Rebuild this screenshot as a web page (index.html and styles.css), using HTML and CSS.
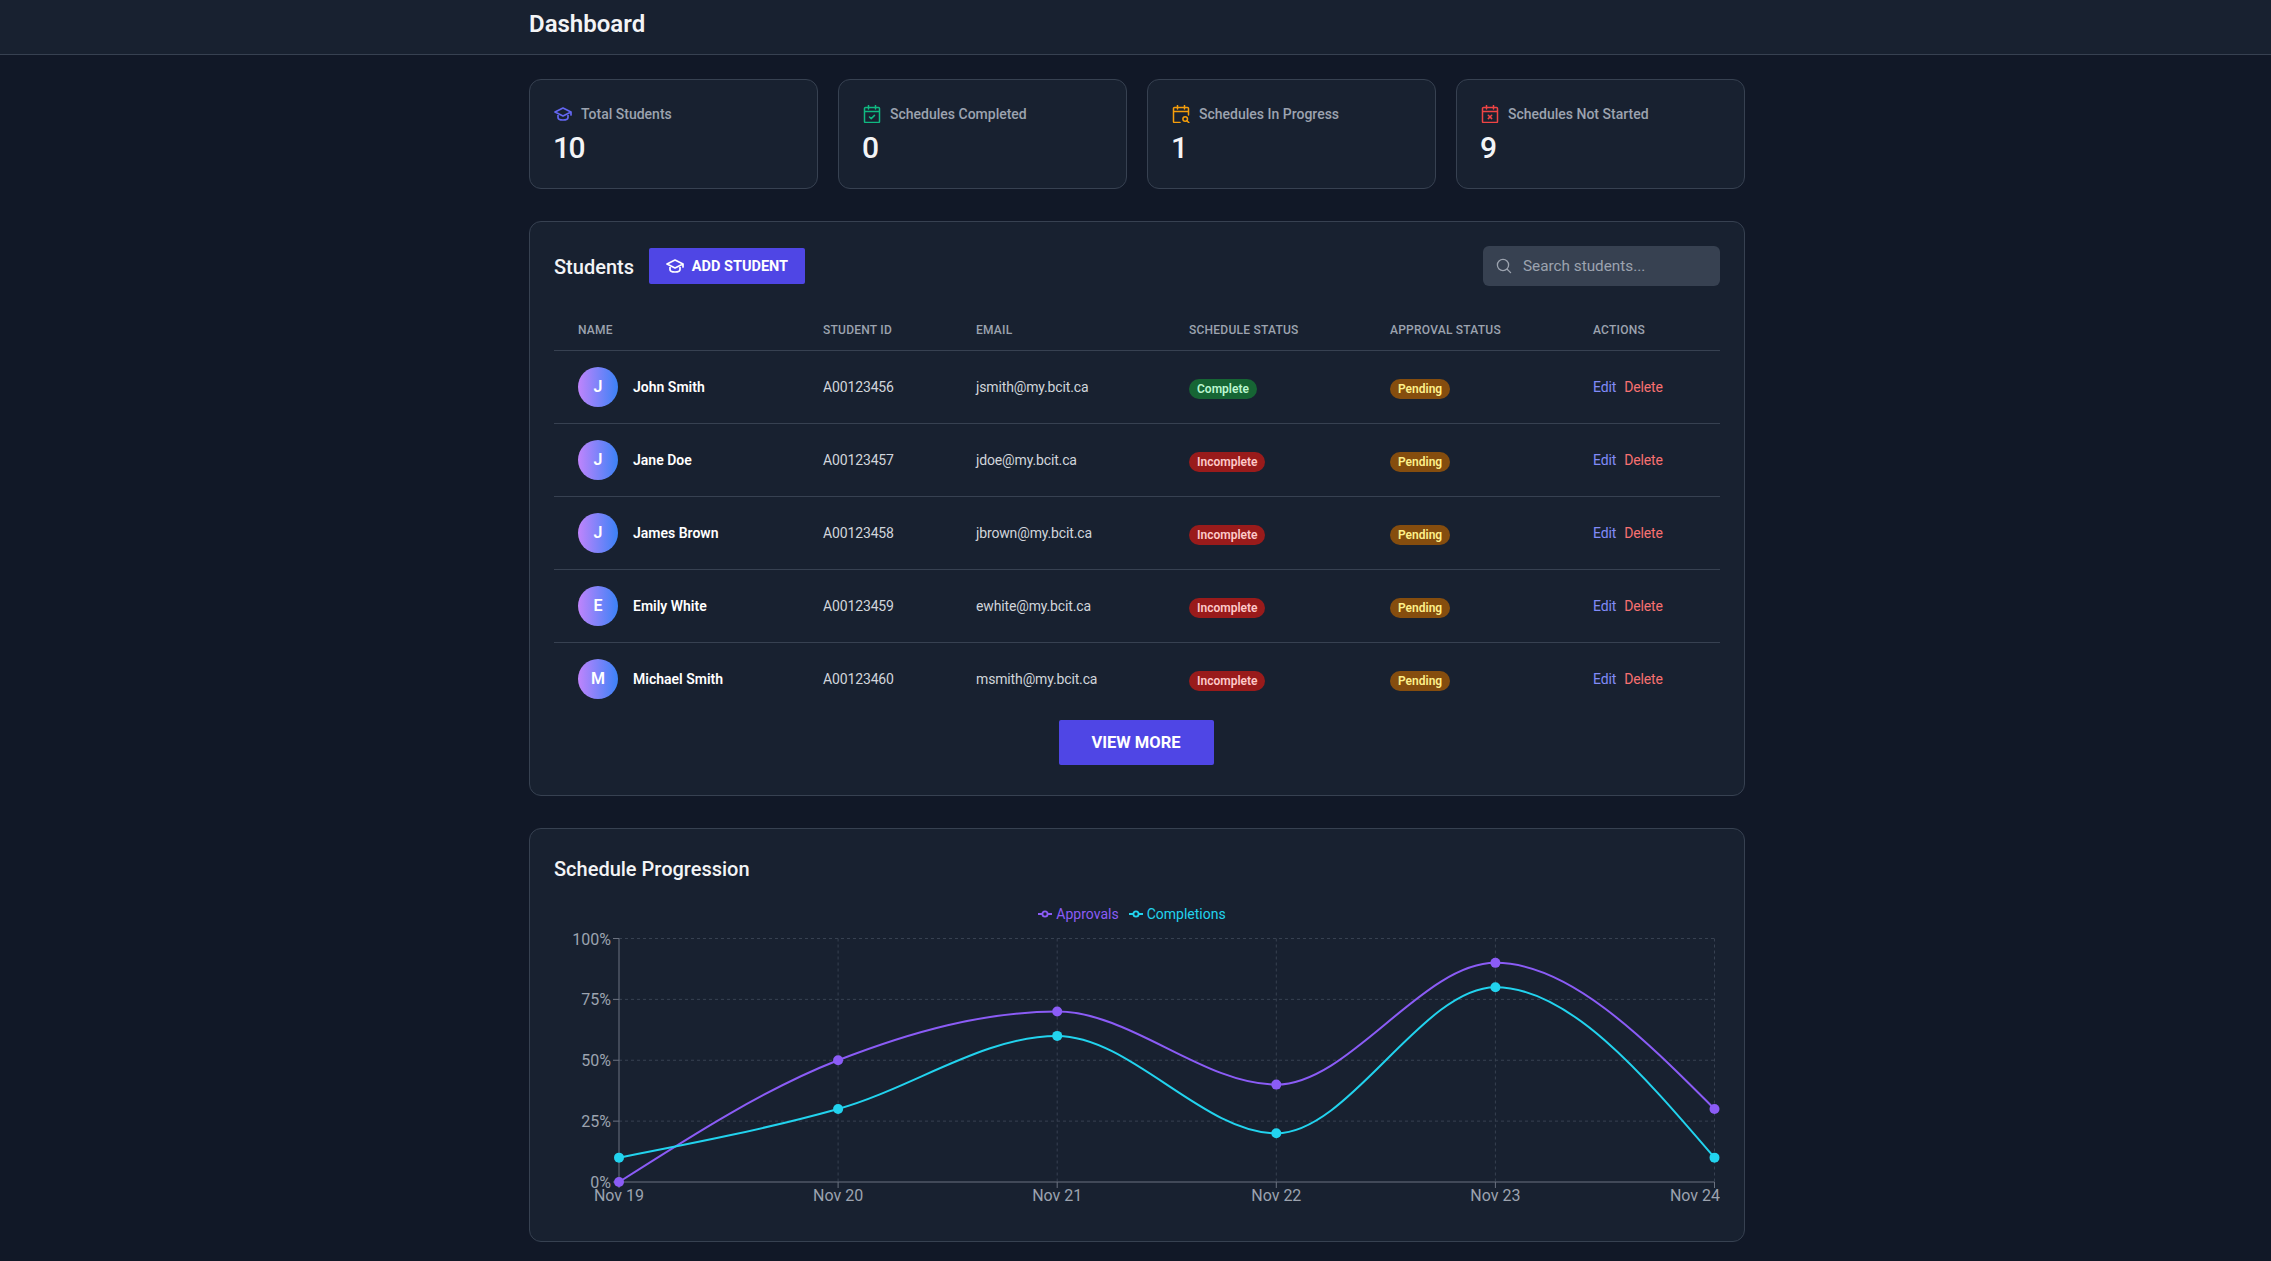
FILE: index.html
```html
<!DOCTYPE html>
<html lang="en">
    <head>
        <meta charset="UTF-8">
        <meta name="viewport" content="width=device-width, initial-scale=1.0">
        <title>Dashboard</title>
        <link rel="stylesheet" href="styles.css">
    </head>
    <body>
        <svg class="sprites" width="0" height="0">
            <symbol id="cap" viewBox="0 0 18 14">
                <path d="M9 1 17 5 9 9 1 5Z M4 6.6V10.5C4 12 6.5 13 9 13S14 12 14 10.5V6.6 M17 5V8" fill="none" stroke="currentColor" stroke-width="1.7" stroke-linejoin="round" stroke-linecap="round"/>
            </symbol>
            <symbol id="calendar-check" viewBox="0 0 18 18">
                <path d="M2.5 2.5H15.5A1 1 0 0 1 16.5 3.5V16.5A1 1 0 0 1 15.5 17.5H2.5A1 1 0 0 1 1.5 16.5V3.5A1 1 0 0 1 2.5 2.5Z M1.5 6.5H16.5 M5.5 .5V4 M12.5 .5V4 M6.5 12 8.2 13.6 11.5 10.4" fill="none" stroke="currentColor" stroke-width="1.5" stroke-linecap="round" stroke-linejoin="round"/>
            </symbol>
            <symbol id="calendar-search" viewBox="0 0 18 18">
                <path d="M8 17.5H2.5A1 1 0 0 1 1.5 16.5V3.5A1 1 0 0 1 2.5 2.5H15.5A1 1 0 0 1 16.5 3.5V10 M1.5 6.5H16.5 M5.5 .5V4 M12.5 .5V4 M14.8 15.8 16.8 17.6" fill="none" stroke="currentColor" stroke-width="1.5" stroke-linecap="round" stroke-linejoin="round"/>
                <circle cx="13.2" cy="14" r="2.3" fill="none" stroke="currentColor" stroke-width="1.5"/>
            </symbol>
            <symbol id="calendar-x" viewBox="0 0 18 18">
                <path d="M2.5 2.5H15.5A1 1 0 0 1 16.5 3.5V16.5A1 1 0 0 1 15.5 17.5H2.5A1 1 0 0 1 1.5 16.5V3.5A1 1 0 0 1 2.5 2.5Z M1.5 6.5H16.5 M5.5 .5V4 M12.5 .5V4 M7.3 10.3 10.7 13.6 M10.7 10.3 7.3 13.6" fill="none" stroke="currentColor" stroke-width="1.5" stroke-linecap="round"/>
            </symbol>
        </svg>

        <header class="topbar">
            <div class="container">
                <h1>Dashboard</h1>
            </div>
        </header>

        <main class="container">
            <section class="stats">
                <div class="stat">
                    <div class="stat-label">
                        <svg class="stat-icon icon-indigo"><use href="#cap"/></svg>
                        Total Students
                    </div>
                    <div class="stat-value">10</div>
                </div>
                <div class="stat">
                    <div class="stat-label">
                        <svg class="stat-icon icon-green"><use href="#calendar-check"/></svg>
                        Schedules Completed
                    </div>
                    <div class="stat-value">0</div>
                </div>
                <div class="stat">
                    <div class="stat-label">
                        <svg class="stat-icon icon-amber"><use href="#calendar-search"/></svg>
                        Schedules In Progress
                    </div>
                    <div class="stat-value">1</div>
                </div>
                <div class="stat">
                    <div class="stat-label">
                        <svg class="stat-icon icon-red"><use href="#calendar-x"/></svg>
                        Schedules Not Started
                    </div>
                    <div class="stat-value">9</div>
                </div>
            </section>

            <section class="panel students">
                <div class="panel-head">
                    <h2>Students</h2>
                    <button class="btn btn-add">
                        <svg class="btn-icon"><use href="#cap"/></svg>
                        ADD STUDENT
                    </button>
                    <label class="search">
                        <svg class="search-icon" viewBox="0 0 16 16">
                            <circle cx="7" cy="7" r="5.6" fill="none" stroke="currentColor" stroke-width="1.3"/>
                            <path d="M11.2 11.2 14.6 14.6" fill="none" stroke="currentColor" stroke-width="1.3" stroke-linecap="round"/>
                        </svg>
                        <input type="text" placeholder="Search students...">
                    </label>
                </div>

                <table class="table">
                    <thead>
                        <tr>
                            <th class="col-name">Name</th>
                            <th class="col-id">Student ID</th>
                            <th class="col-email">Email</th>
                            <th class="col-schedule">Schedule Status</th>
                            <th class="col-approval">Approval Status</th>
                            <th class="col-actions">Actions</th>
                        </tr>
                    </thead>
                    <tbody>
                        <tr>
                            <td><div class="person"><span class="avatar">J</span><span class="person-name">John Smith</span></div></td>
                            <td>A00123456</td>
                            <td>jsmith@my.bcit.ca</td>
                            <td><span class="badge badge-green">Complete</span></td>
                            <td><span class="badge badge-yellow">Pending</span></td>
                            <td><a class="link-edit">Edit</a><a class="link-delete">Delete</a></td>
                        </tr>
                        <tr>
                            <td><div class="person"><span class="avatar">J</span><span class="person-name">Jane Doe</span></div></td>
                            <td>A00123457</td>
                            <td>jdoe@my.bcit.ca</td>
                            <td><span class="badge badge-red">Incomplete</span></td>
                            <td><span class="badge badge-yellow">Pending</span></td>
                            <td><a class="link-edit">Edit</a><a class="link-delete">Delete</a></td>
                        </tr>
                        <tr>
                            <td><div class="person"><span class="avatar">J</span><span class="person-name">James Brown</span></div></td>
                            <td>A00123458</td>
                            <td>jbrown@my.bcit.ca</td>
                            <td><span class="badge badge-red">Incomplete</span></td>
                            <td><span class="badge badge-yellow">Pending</span></td>
                            <td><a class="link-edit">Edit</a><a class="link-delete">Delete</a></td>
                        </tr>
                        <tr>
                            <td><div class="person"><span class="avatar">E</span><span class="person-name">Emily White</span></div></td>
                            <td>A00123459</td>
                            <td>ewhite@my.bcit.ca</td>
                            <td><span class="badge badge-red">Incomplete</span></td>
                            <td><span class="badge badge-yellow">Pending</span></td>
                            <td><a class="link-edit">Edit</a><a class="link-delete">Delete</a></td>
                        </tr>
                        <tr>
                            <td><div class="person"><span class="avatar">M</span><span class="person-name">Michael Smith</span></div></td>
                            <td>A00123460</td>
                            <td>msmith@my.bcit.ca</td>
                            <td><span class="badge badge-red">Incomplete</span></td>
                            <td><span class="badge badge-yellow">Pending</span></td>
                            <td><a class="link-edit">Edit</a><a class="link-delete">Delete</a></td>
                        </tr>
                    </tbody>
                </table>

                <div class="more">
                    <button class="btn btn-more">VIEW MORE</button>
                </div>
            </section>

            <section class="panel progression">
                <h2>Schedule Progression</h2>
                <ul class="legend">
                    <li class="legend-item legend-approvals">
                        <svg class="legend-icon" viewBox="0 0 14 14"><path d="M0 7H4.5M9.5 7H14" stroke="currentColor" stroke-width="2"/><circle cx="7" cy="7" r="2.6" fill="none" stroke="currentColor" stroke-width="1.8"/></svg>
                        Approvals
                    </li>
                    <li class="legend-item legend-completions">
                        <svg class="legend-icon" viewBox="0 0 14 14"><path d="M0 7H4.5M9.5 7H14" stroke="currentColor" stroke-width="2"/><circle cx="7" cy="7" r="2.6" fill="none" stroke="currentColor" stroke-width="1.8"/></svg>
                        Completions
                    </li>
                </ul>
                <svg id="chart" class="chart" width="1166" height="292" viewBox="0 0 1166 292"></svg>
            </section>
        </main>
        <script src="script.js"></script>
    </body>
</html>
```
FILE: styles.css
```css
* {
    box-sizing: border-box;
}
body {
    background: #111827;
    color: #f3f4f6;
    font-family: Roboto, "Noto Sans", sans-serif;
    font-size: 14px;
    margin: 0;
    padding-bottom: 16px;
}
h1, h2 {
    margin: 0;
}
.sprites {
    position: absolute;
}
.container {
    margin-left: 529px;
    width: 1216px;
}
.topbar {
    background: #182130;
    border-bottom: 1px solid #374151;
    height: 55px;
    padding-top: 8px;
}
.topbar h1 {
    font-size: 24px;
    font-weight: 600;
    line-height: 32px;
}

.stats {
    display: grid;
    gap: 20px;
    grid-template-columns: repeat(4, 1fr);
    padding-top: 24px;
}
.stat {
    background: #182130;
    border: 1px solid #374151;
    border-radius: 12px;
    height: 110px;
    padding: 24px;
}
.stat-label {
    align-items: center;
    color: #9ca3af;
    display: flex;
    font-weight: 500;
    gap: 9px;
    line-height: 20px;
}
.stat-icon {
    flex: none;
    height: 18px;
    width: 18px;
}
.icon-indigo { color: #6366f1; }
.icon-green { color: #10b981; }
.icon-amber { color: #f59e0b; }
.icon-red { color: #ef4444; }
.stat-value {
    font-size: 30px;
    font-weight: 500;
    letter-spacing: -1.5px;
    line-height: 36px;
    margin: 6px 0 0 -1px;
}

.panel {
    background: #182130;
    border: 1px solid #374151;
    border-radius: 12px;
    margin-top: 32px;
    padding: 24px;
}
.panel h2 {
    font-size: 20px;
    font-weight: 500;
    line-height: 28px;
}
.panel-head {
    align-items: center;
    display: flex;
    gap: 15px;
}
.panel-head h2 {
    padding-top: 2px;
}
.btn {
    align-items: center;
    background: #4f46e5;
    border: 0;
    border-radius: 2px;
    color: white;
    display: inline-flex;
    font-family: inherit;
    font-weight: 700;
    justify-content: center;
}
.btn-add {
    font-size: 14.5px;
    gap: 8px;
    height: 36px;
    width: 156px;
}
.btn-icon {
    height: 14px;
    width: 18px;
}
.search {
    align-items: center;
    background: #374151;
    border-radius: 6px;
    color: #9ca3af;
    display: flex;
    gap: 9px;
    height: 40px;
    margin-left: auto;
    padding-left: 13px;
    width: 237px;
}
.search-icon {
    flex: none;
    height: 16px;
    width: 16px;
}
.search input {
    background: none;
    border: 0;
    color: #f3f4f6;
    font-family: inherit;
    font-size: 15.3px;
    min-width: 0;
    outline: none;
    width: 100%;
}
.search input::placeholder {
    color: #9ca3af;
    opacity: 1;
}

.table {
    border-collapse: separate;
    border-spacing: 0;
    margin-top: 24px;
    table-layout: fixed;
    width: 100%;
}
.table th {
    border-bottom: 1px solid #374151;
    color: #9ca3af;
    font-size: 12px;
    font-weight: 500;
    letter-spacing: .02em;
    line-height: 16px;
    padding: 12px 24px;
    text-align: left;
    text-transform: uppercase;
    white-space: nowrap;
}
.col-name { width: 245px; }
.col-id { width: 153px; }
.col-email { width: 213px; }
.col-schedule { width: 201px; }
.col-approval { width: 203px; }
.col-actions { width: 151px; }
.table td {
    border-bottom: 1px solid #374151;
    color: #d1d5db;
    letter-spacing: -.01em;
    line-height: 20px;
    padding: 16px 24px;
    white-space: nowrap;
}
.table tr:last-child td {
    border-bottom: 0;
}
.person {
    align-items: center;
    display: flex;
    gap: 15px;
}
.avatar {
    align-items: center;
    background: linear-gradient(to right, #c084fc, #3b82f6);
    border-radius: 50%;
    color: white;
    display: flex;
    flex: none;
    font-size: 16px;
    font-weight: 600;
    height: 40px;
    justify-content: center;
    width: 40px;
}
.person-name {
    color: white;
    font-weight: 600;
    letter-spacing: 0;
}
.badge {
    border-radius: 10px;
    display: inline-block;
    font-size: 12px;
    font-weight: 600;
    letter-spacing: 0;
    line-height: 20px;
    padding: 0 8px;
    vertical-align: -2px;
}
.badge-green { background: #166534; color: #bbf7d0; }
.badge-red { background: #991b1b; color: #fecaca; }
.badge-yellow { background: #854d0e; color: #fef08a; }
.link-edit {
    color: #818cf8;
    margin-right: 8px;
}
.link-delete {
    color: #f87171;
}

.more {
    display: flex;
    justify-content: center;
    margin: 5px 2px 6px 0;
}
.btn-more {
    font-size: 16.5px;
    height: 45px;
    width: 155px;
}

.progression h2 {
    margin-top: 2px;
}
.legend {
    display: flex;
    gap: 10px;
    justify-content: center;
    line-height: 20px;
    list-style: none;
    margin: 21px 10px 0 0;
    padding: 0;
}
.legend-item {
    align-items: center;
    display: flex;
    gap: 4px;
}
.legend-approvals { color: #8b5cf6; }
.legend-completions { color: #22d3ee; }
.legend-icon {
    height: 14px;
    width: 14px;
}
.chart {
    display: block;
    margin-top: 1px;
}
.grid-line {
    stroke: #374151;
    stroke-dasharray: 3 3;
}
.axis-line {
    stroke: #6b7280;
}
.tick-label {
    fill: #9ca3af;
    font-size: 16px;
}
.series {
    fill: none;
    stroke-width: 2;
}
```
FILE: script.js
```js
const days = ["Nov 19", "Nov 20", "Nov 21", "Nov 22", "Nov 23", "Nov 24"];
const series = [
    { color: "#8b5cf6", values: [0, 50, 70, 40, 90, 30] },
    { color: "#22d3ee", values: [10, 30, 60, 20, 80, 10] },
];
const left = 65;
const step = 219.1;
const top100 = 13.5;
const bottom = 257;
const right = left + step * 5;

const chart = document.getElementById("chart");

function add(name, attrs, text) {
    const el = document.createElementNS("http://www.w3.org/2000/svg", name);
    for (const key in attrs) el.setAttribute(key, attrs[key]);
    if (text) el.textContent = text;
    chart.appendChild(el);
    return el;
}

function yOf(value) {
    return bottom - (bottom - top100) * value / 100;
}

// monotone curve through evenly spaced points
function curve(points) {
    const n = points.length;
    const slopes = [];
    for (let i = 1; i < n - 1; i++) {
        const s0 = (points[i][1] - points[i - 1][1]) / step;
        const s1 = (points[i + 1][1] - points[i][1]) / step;
        const p = (s0 + s1) / 2;
        slopes[i] = (Math.sign(s0) + Math.sign(s1)) * Math.min(Math.abs(s0), Math.abs(s1), 0.5 * Math.abs(p));
    }
    slopes[0] = (3 * (points[1][1] - points[0][1]) / step - slopes[1]) / 2;
    slopes[n - 1] = (3 * (points[n - 1][1] - points[n - 2][1]) / step - slopes[n - 2]) / 2;
    let d = `M${points[0][0]},${points[0][1]}`;
    const dx = step / 3;
    for (let i = 1; i < n; i++) {
        const [x0, y0] = points[i - 1];
        const [x1, y1] = points[i];
        d += `C${x0 + dx},${y0 + dx * slopes[i - 1]} ${x1 - dx},${y1 - dx * slopes[i]} ${x1},${y1}`;
    }
    return d;
}

[100, 75, 50, 25].forEach(function(value) {
    add("line", { class: "grid-line", x1: left, x2: right, y1: yOf(value), y2: yOf(value) });
});
days.forEach(function(day, i) {
    if (i === 0) return;
    const x = left + step * i;
    add("line", { class: "grid-line", x1: x, x2: x, y1: top100, y2: bottom });
});

add("line", { class: "axis-line", x1: left, x2: left, y1: top100, y2: bottom });
add("line", { class: "axis-line", x1: left, x2: right, y1: bottom, y2: bottom });

[100, 75, 50, 25, 0].forEach(function(value) {
    add("line", { class: "axis-line", x1: left - 6, x2: left, y1: yOf(value), y2: yOf(value) });
    add("text", { class: "tick-label", x: left - 8, y: yOf(value) + 6, "text-anchor": "end" }, value + "%");
});
days.forEach(function(day, i) {
    const x = left + step * i;
    add("line", { class: "axis-line", x1: x, x2: x, y1: bottom, y2: bottom + 6 });
    const last = i === days.length - 1;
    add("text", {
        class: "tick-label",
        x: last ? 1166 : x,
        y: bottom + 19,
        "text-anchor": last ? "end" : "middle",
    }, day);
});

series.forEach(function(line) {
    const points = line.values.map((value, i) => [left + step * i, yOf(value)]);
    add("path", { class: "series", d: curve(points), stroke: line.color });
    points.forEach(function(point) {
        add("circle", { cx: point[0], cy: point[1], r: 5, fill: line.color });
    });
});
```
